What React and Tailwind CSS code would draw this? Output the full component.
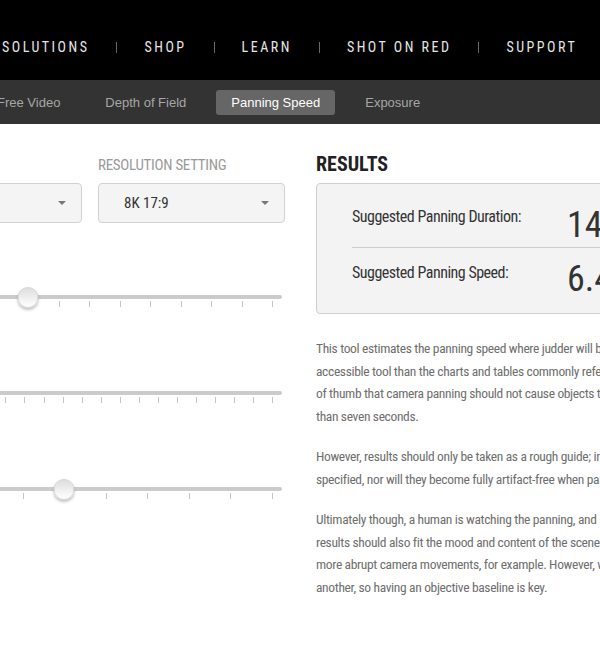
import React from 'react';

const NAV = ['SOLUTIONS', 'SHOP', 'LEARN', 'SHOT ON RED', 'SUPPORT'];
const TABS = ['Free Video', 'Depth of Field', 'Panning Speed', 'Exposure'];

// slider presets: intervals and thumb index
const SLIDERS = [
  { steps: 15, value: 7 },
  { steps: 24, value: 2 },
  { steps: 11, value: 6 },
];

const PARAGRAPHS = [
  [
    'This tool estimates the panning speed where judder will become noticeable, and is intended as a more',
    'accessible tool than the charts and tables commonly referenced elsewhere. It follows the rule',
    'of thumb that camera panning should not cause objects to traverse the frame in less',
    'than seven seconds.',
  ],
  [
    'However, results should only be taken as a rough guide; in practice, judder will not abruptly appear at the speed',
    'specified, nor will they become fully artifact-free when panning more slowly.',
  ],
  [
    'Ultimately though, a human is watching the panning, and it is their perception that matters. The',
    'results should also fit the mood and content of the scene. An action sequence may call for faster and',
    'more abrupt camera movements, for example. However, what looks fine to one viewer may not to',
    'another, so having an objective baseline is key.',
  ],
];

const Slider = ({ steps, value }) => {
  const ticks = Array.from({ length: steps + 1 }, (_, i) => i);
  return (
    <div className="relative h-[24px]">
      <div className="absolute left-0 right-0 top-[8px] h-[4px] rounded-full bg-[#cbcbcb]" />
      {ticks.map((i) => (
        <span
          key={i}
          className="absolute top-[14px] h-[6px] w-px bg-[#c4c4c4]"
          style={{ left: `calc(10px + (100% - 20px) * ${i / steps})` }}
        />
      ))}
      <span
        className="absolute top-0 h-[21px] w-[21px] -translate-x-1/2 rounded-full border border-[#d6d6d6] bg-gradient-to-b from-[#dedede] to-white shadow-[0_2px_3px_rgba(0,0,0,0.25)]"
        style={{ left: `calc(10px + (100% - 20px) * ${value / steps})` }}
      />
    </div>
  );
};

const Select = ({ value }) => (
  <div className="flex h-[40px] w-[187px] items-center justify-between rounded-[4px] border border-[#d2d2d2] bg-[#f4f4f4] pl-[25px] pr-[15px] text-[15px] text-[#333]">
    <span>{value}</span>
    <span className="h-0 w-0 border-x-[4px] border-t-[4px] border-x-transparent border-t-[#777]" />
  </div>
);

const App = () => {
  return (
    <div className="h-[665px] w-[600px] overflow-hidden bg-white font-['Roboto_Condensed',Roboto,sans-serif]">
      {/* Top nav */}
      <div className="flex h-[80px] items-center bg-black pt-[14px] pl-[2px] text-[14px] tracking-[2.5px] text-[#e6e6e6]">
        {NAV.map((item, i) => (
          <React.Fragment key={item}>
            {i > 0 && <span className="mx-[27px] h-[11px] w-px bg-[#666]" />}
            <span className="whitespace-nowrap">{item}</span>
          </React.Fragment>
        ))}
      </div>

      {/* Sub nav */}
      <div className="ml-[-18px] flex h-[44px] items-center gap-[15px] bg-[#333] pt-[1px] font-['Liberation_Sans',Arial,sans-serif] text-[13px] text-[#a6a6a6]">
        {TABS.map((tab) => (
          <span
            key={tab}
            className={
              tab === 'Panning Speed'
                ? 'rounded-[3px] bg-[#666] px-[15px] py-[3px] text-white'
                : 'px-[15px] py-[3px]'
            }
          >
            {tab}
          </span>
        ))}
      </div>

      {/* Main */}
      <div className="ml-[-195px] mt-[30px] flex gap-[31px]">
        <div className="w-[480px] shrink-0">
          <div className="flex justify-end gap-4">
            <div>
              <div className="h-[29px]" />
              <Select value="" />
            </div>
            <div>
              <div className="h-[29px] text-[15px] tracking-[-0.3px] uppercase text-[#9a9a9a]">Resolution Setting</div>
              <Select value="8K 17:9" />
            </div>
          </div>
          <div className="mt-[64px] flex flex-col gap-[72px] pr-[3px]">
            {SLIDERS.map((s, i) => (
              <Slider key={i} steps={s.steps} value={s.value} />
            ))}
          </div>
        </div>

        <div className="w-[520px] shrink-0">
          <h2 className="h-[29px] text-[20px] font-bold leading-[20px] text-[#222]">RESULTS</h2>
          <div className="h-[131px] rounded-[4px] border border-[#cfcfcf] bg-[#f3f3f3] px-[35px] text-[#333]">
            <div className="flex h-[64px] items-start border-b border-[#cdcdcd]">
              <span className="mt-[23px] w-[215px] text-[16px] leading-[20px] tracking-[-0.5px]">Suggested Panning Duration:</span>
              <span className="mt-[23px] text-[36px] leading-none">14 s</span>
            </div>
            <div className="flex h-[64px] items-start">
              <span className="mt-[15px] w-[215px] text-[16px] leading-[20px] tracking-[-0.5px]">Suggested Panning Speed:</span>
              <span className="mt-[13px] text-[36px] leading-none">6.4 °/s</span>
            </div>
          </div>
          <div className="mt-[23px] flex flex-col gap-[18px] text-[13.5px] leading-[22.5px] tracking-[-0.35px] text-[#6e6e6e]">
            {PARAGRAPHS.map((lines, i) => (
              <p key={i}>
                {lines.map((line) => (
                  <span key={line} className="block whitespace-nowrap">{line}</span>
                ))}
              </p>
            ))}
          </div>
        </div>
      </div>
    </div>
  );
};

export default App;
